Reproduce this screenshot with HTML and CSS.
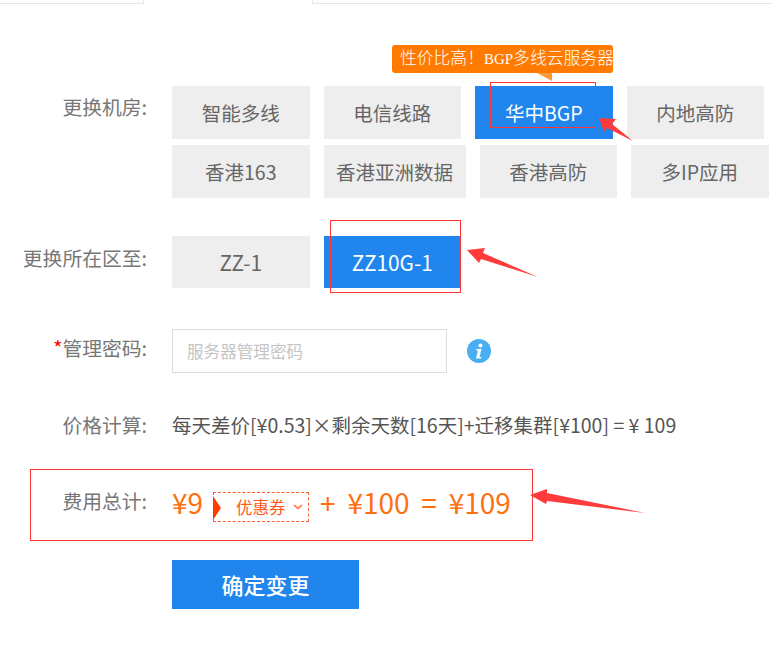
FILE: index.html
```html
<!DOCTYPE html>
<html lang="zh-CN">
<head>
    <meta charset="UTF-8">
    <meta name="viewport" content="width=device-width, initial-scale=1.0">
    <title>更换机房</title>
    <link rel="stylesheet" href="styles.css">
</head>
<body>
    <div class="tabs">
        <div class="tab-side tab-left"></div>
        <div class="tab-active"></div>
        <div class="tab-side tab-right"></div>
    </div>

    <div class="form">
        <div class="row row-room">
            <div class="label">更换机房:</div>
            <div class="options">
                <div class="btn-row">
                    <a class="opt">智能多线</a>
                    <a class="opt">电信线路</a>
                    <a class="opt active">华中BGP</a>
                    <a class="opt">内地高防</a>
                </div>
                <div class="btn-row">
                    <a class="opt">香港163</a>
                    <a class="opt">香港亚洲数据</a>
                    <a class="opt">香港高防</a>
                    <a class="opt">多IP应用</a>
                </div>
            </div>
        </div>

        <div class="row row-zone">
            <div class="label">更换所在区至:</div>
            <div class="btn-row">
                <a class="opt">ZZ-1</a>
                <a class="opt active">ZZ10G-1</a>
            </div>
        </div>

        <div class="row row-pass">
            <div class="label"><span class="star">*</span>管理密码:</div>
            <div class="pass-wrap">
                <input class="pass" type="text" placeholder="服务器管理密码">
                <svg class="info" width="26" height="26" viewBox="0 0 26 26">
                    <circle cx="13" cy="13" r="12" fill="#4aaef2"/>
                    <circle cx="14.5" cy="7.5" r="2" fill="#fff"/>
                    <path d="M10.5 11h5l-2 8h2l-.5 1.5h-5l2-8h-2z" fill="#fff"/>
                </svg>
            </div>
        </div>

        <div class="row row-calc">
            <div class="label">价格计算:</div>
            <div class="calc">每天差价[¥0.53]×剩余天数[16天]+迁移集群[¥100] = ¥ 109</div>
        </div>

        <div class="row row-total">
            <div class="label">费用总计:</div>
            <div class="total">
                <span>¥9</span>
                <div class="coupon">
                    <span class="coupon-flag"></span>
                    <span>优惠券</span>
                    <svg class="chevron" width="10" height="6" viewBox="0 0 10 6">
                        <path d="M1 1l4 3.5L9 1" fill="none" stroke="#ff8a5a" stroke-width="1.8"/>
                    </svg>
                </div>
                <span class="sum">+ ¥100 = ¥109</span>
            </div>
        </div>

        <div class="row row-submit">
            <div class="label"></div>
            <a class="submit">确定变更</a>
        </div>
    </div>

    <div class="tip">性价比高！<span class="tip-latin">BGP</span>多线云服务器</div>

    <!-- hand drawn marks on top of the screenshot -->
    <svg class="marks" width="771" height="650" viewBox="0 0 771 650">
        <g fill="none" stroke="#f33" stroke-width="1">
            <rect x="490.5" y="82.5" width="105" height="45"/>
            <rect x="330.5" y="220.5" width="130" height="72"/>
            <rect x="30.5" y="469.5" width="502" height="71"/>
        </g>
        <g fill="#ff3b3b">
            <polygon points="599,118 616,119 612,124 633,141 607,128 604,132"/>
            <polygon points="467,250 485,248 483,253 538,277 481,259 479,263"/>
            <polygon points="530,495 547,489 547,493 645,513 547,501 546,504"/>
        </g>
    </svg>
</body>
</html>
```

FILE: styles.css
```css
* {
    margin: 0;
    padding: 0;
    box-sizing: border-box;
}

body {
    position: relative;
    width: 771px;
    height: 650px;
    overflow: hidden;
    background: #fff;
    color: #666;
    font-family: "Noto Sans CJK SC", "Noto Sans", sans-serif;
}

/* tab strip at the very top */
.tabs {
    display: flex;
    height: 4px;
}

.tab-side {
    border-bottom: 1px solid #e6e6e6;
}

.tab-left {
    width: 144px;
    border-right: 1px solid #e6e6e6;
}

.tab-active {
    width: 168px;
}

.tab-right {
    flex: 1;
    border-left: 1px solid #e6e6e6;
}

.form {
    padding-top: 82px;
}

.row {
    display: flex;
    column-gap: 25px;
}

.label {
    flex: none;
    width: 147px;
    text-align: right;
    font-size: 19.8px;
    line-height: 42px;
    color: #777;
    white-space: nowrap;
}

.star {
    color: #f00;
}

.options {
    display: flex;
    flex-direction: column;
    row-gap: 6px;
}

.btn-row {
    display: flex;
    column-gap: 14px;
}

.opt {
    min-width: 137.5px;
    height: 53px;
    padding: 0 12.5px;
    background: #eee;
    color: #666;
    font-size: 19.5px;
    line-height: 53px;
    text-align: center;
    white-space: nowrap;
}

.opt.active {
    background: #2086ee;
    color: #fff;
}

.row-zone {
    margin-top: 38px;
}

.row-zone .label {
    line-height: 44px;
}

.row-zone .opt {
    height: 52px;
    font-size: 20.8px;
}

.row-pass {
    margin-top: 41px;
}

.pass-wrap {
    display: flex;
    align-items: center;
    column-gap: 19px;
}

.pass {
    width: 275px;
    height: 44px;
    padding: 0 14px;
    border: 1px solid #ddd;
    font-family: inherit;
    font-size: 16.6px;
    outline: none;
}

.pass::placeholder {
    color: #c4c4c4;
}

.row-pass .label {
    line-height: 38px;
}

.row-calc {
    margin-top: 31px;
}

.calc {
    font-size: 19.5px;
    line-height: 42px;
    color: #555;
    white-space: nowrap;
}

.row-total {
    margin-top: 39px;
    height: 50px;
}

.row-total .label {
    line-height: 32px;
}

.total {
    display: flex;
    align-items: flex-start;
    color: #ff7010;
    font-size: 28px;
    line-height: 34px;
    white-space: nowrap;
}

.coupon {
    position: relative;
    display: flex;
    align-items: center;
    width: 96px;
    height: 30px;
    margin: 7px 0 0 10px;
    padding-left: 22px;
    border: 1px dashed #ff5a2a;
    color: #ff5a1a;
    font-size: 16.5px;
    line-height: 28px;
}

.coupon-flag {
    position: absolute;
    left: -1px;
    top: 3px;
    border-left: 8px solid #ff3c00;
    border-top: 12px solid transparent;
    border-bottom: 12px solid transparent;
}

.chevron {
    margin-left: 7px;
}

.sum {
    margin-left: 11px;
    word-spacing: 5.5px;
}

.row-submit {
    margin-top: 25px;
}

.submit {
    width: 187px;
    height: 49px;
    background: #2086ee;
    color: #fff;
    font-size: 22px;
    font-weight: 500;
    line-height: 49px;
    text-align: center;
}

/* tooltip over the room buttons */
.tip {
    position: absolute;
    left: 392px;
    top: 45px;
    width: 221px;
    height: 28px;
    padding-left: 8px;
    background: #ff7a00;
    border-radius: 3px;
    color: #fff;
    font-family: "Noto Sans CJK SC", sans-serif;
    font-weight: 300;
    font-size: 16.8px;
    line-height: 25px;
    white-space: nowrap;
}

.tip-latin {
    font-family: "Liberation Serif", serif;
    font-size: 15px;
}

.tip::after {
    content: "";
    position: absolute;
    left: 145px;
    top: 28px;
    border-right: 15px solid #ff9a30;
    border-bottom: 8px solid transparent;
}

.marks {
    position: absolute;
    left: 0;
    top: 0;
    pointer-events: none;
}
```
